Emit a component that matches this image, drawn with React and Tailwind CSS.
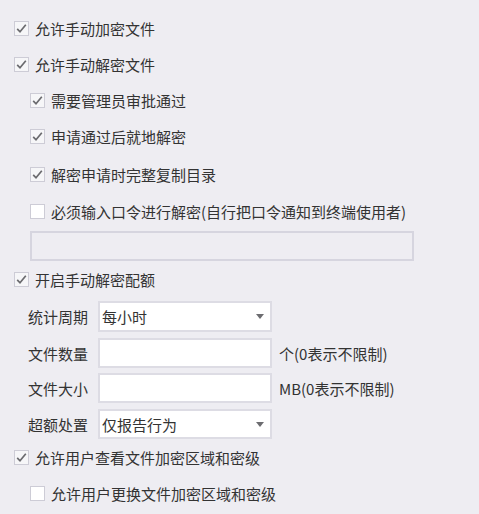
import React from "react";

const font = { fontFamily: '"Noto Sans CJK SC", "Microsoft YaHei", sans-serif' };

function Box({ checked }) {
  return (
    <span
      className={`flex h-[15px] w-[15px] shrink-0 items-center justify-center border border-[#cdccd6] ${
        checked ? "bg-[#f6f6f8]" : "bg-white"
      }`}
    >
      {checked && (
        <svg width="13" height="13" viewBox="0 0 13 13">
          <path d="M2.2 6.8 L5 9.8 L10.8 2.8" fill="none" stroke="#6a6a6e" strokeWidth="1.7" />
        </svg>
      )}
    </span>
  );
}

function Row({ checked, label, indent, h = "h-9" }) {
  return (
    <div className={`flex ${h} items-center gap-[6px] ${indent ? "pl-[30px]" : "pl-[14px]"}`}>
      <Box checked={checked} />
      <span className="leading-none">{label}</span>
    </div>
  );
}

function Caret() {
  return (
    <svg width="8" height="5" viewBox="0 0 8 5">
      <path d="M0 0 H8 L4 5 Z" fill="#6c6c70" />
    </svg>
  );
}

function Field({ label, children, mt }) {
  return (
    <div className={`flex items-center ${mt} pl-[28px]`}>
      <span className="w-[70px] leading-none">{label}</span>
      {children}
    </div>
  );
}

export default function App() {
  return (
    <div
      className="h-[514px] w-[479px] overflow-hidden bg-[#eeedf2] pt-[10px] text-[15px] text-[#333333]"
      style={font}
    >
      <Row checked label="允许手动加密文件" />
      <Row checked label="允许手动解密文件" />
      <Row checked indent label="需要管理员审批通过" />
      <Row checked indent h="h-[37px]" label="申请通过后就地解密" />
      <Row checked indent h="h-[38px]" label="解密申请时完整复制目录" />
      <Row indent label="必须输入口令进行解密(自行把口令通知到终端使用者)" />
      <div className="ml-[30px] mt-[2px] h-[30px] w-[384px] border-2 border-[#d6d5df] bg-[#eeedf2]" />
      <Row checked h="h-9" label="开启手动解密配额" />
      <Field label="统计周期" mt="mt-[4px]">
        <div className="flex h-[31px] w-[174px] items-center justify-between border-2 border-[#dddce4] bg-white pl-[2px] pr-[6px]">
          <span className="leading-none">每小时</span>
          <Caret />
        </div>
      </Field>
      <Field label="文件数量" mt="mt-[6px]">
        <div className="h-[30px] w-[174px] border-2 border-[#dddce4] bg-white" />
        <span className="ml-[7px] leading-none">个(0表示不限制)</span>
      </Field>
      <Field label="文件大小" mt="mt-[5px]">
        <div className="h-[30px] w-[174px] border-2 border-[#dddce4] bg-white" />
        <span className="ml-[7px] leading-none">MB(0表示不限制)</span>
      </Field>
      <Field label="超额处置" mt="mt-[6px]">
        <div className="flex h-[30px] w-[174px] items-center justify-between border-2 border-[#dddce4] bg-white pl-[2px] pr-[6px]">
          <span className="leading-none">仅报告行为</span>
          <Caret />
        </div>
      </Field>
      <Row checked label="允许用户查看文件加密区域和密级" />
      <Row indent label="允许用户更换文件加密区域和密级" />
    </div>
  );
}
